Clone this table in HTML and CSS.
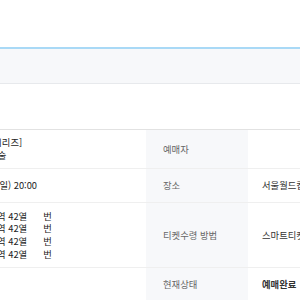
FILE: index.html
```html
<!DOCTYPE html>
<html lang="ko">
<head>
<meta charset="utf-8">
<link rel="stylesheet" href="styles.css">
</head>
<body>
<div class="top"></div>
<div class="band"></div>
<div class="gap"></div>
<table class="info">
  <colgroup>
    <col class="c1"><col class="c2"><col class="c3">
  </colgroup>
  <tr class="r1">
    <td class="val left"><div>[2024 아트 시리즈]</div><div>서울, 현대 미술</div></td>
    <th>예매자</th>
    <td class="val"></td>
  </tr>
  <tr class="r2">
    <td class="val left">2024.05.26 (일) 20:00</td>
    <th>장소</th>
    <td class="val">서울월드컵경기장</td>
  </tr>
  <tr class="r3">
    <td class="val left">
      <div>1층 W석 A구역 42열<span class="seat"></span>번</div>
      <div>1층 W석 A구역 42열<span class="seat"></span>번</div>
      <div>1층 W석 A구역 42열<span class="seat"></span>번</div>
      <div>1층 W석 A구역 42열<span class="seat"></span>번</div>
    </td>
    <th>티켓수령 방법</th>
    <td class="val">스마트티켓</td>
  </tr>
  <tr class="r4">
    <td class="val left"></td>
    <th>현재상태</th>
    <td class="val strong">예매완료</td>
  </tr>
</table>
</body>
</html>
```
FILE: styles.css
```css
html, body {
  margin: 0;
  padding: 0;
  background: #fff;
  overflow: hidden;
  width: 300px;
  height: 300px;
}
body {
  font-family: "Noto Sans CJK KR", "Noto Sans", sans-serif;
  font-size: 9.33px;
  line-height: 12.67px;
  color: #333;
}
.top {
  height: 47px;
}
.band {
  height: 34px;
  background: #f7f8fa;
  border-top: 2px solid #a9d9f6;
  border-bottom: 1px solid #e7e9ec;
}
.gap {
  height: 45px;
}
.info {
  border-collapse: collapse;
  table-layout: fixed;
  width: 520px;
  margin-left: -70px;
  border-top: 1px solid #e2e2e2;
}
.c1 { width: 216px; }
.c2 { width: 102px; }
.c3 { width: 202px; }
.info td, .info th {
  border-bottom: 1px solid #efefef;
  vertical-align: middle;
  text-align: left;
  padding: 0;
}
.info th {
  background: #f7f8fa;
  color: #666;
  font-weight: normal;
  padding-left: 17px;
}
.info .val {
  padding-left: 14px;
  color: #333;
}
.info .left {
  padding-left: 17px;
  color: #222;
  white-space: nowrap;
}
.r1 td, .r1 th { height: 38px; }
.r2 td, .r2 th { height: 33px; }
.r3 td, .r3 th { height: 64px; }
.r4 td, .r4 th { height: 33px; }
.seat {
  display: inline-block;
  width: 16px;
}
.strong {
  font-weight: bold;
}
```
